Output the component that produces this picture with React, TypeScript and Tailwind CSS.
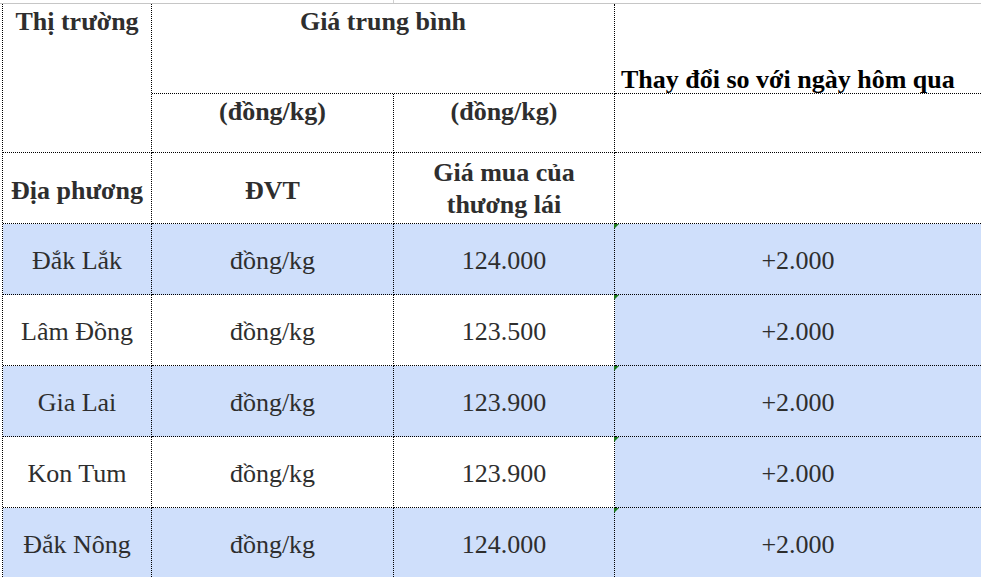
import React from "react";

const rows = [
  { name: "Đắk Lắk", price: "124.000", blue: true },
  { name: "Lâm Đồng", price: "123.500", blue: false },
  { name: "Gia Lai", price: "123.900", blue: true },
  { name: "Kon Tum", price: "123.900", blue: false },
  { name: "Đắk Nông", price: "124.000", blue: true },
];

const cell = "border-r border-b border-dotted border-black flex justify-center leading-[30px] text-center";

export default function App() {
  return (
    <div className="w-[981px] h-[577px] overflow-hidden bg-white font-['Liberation_Serif',serif] text-[26px] text-[#2e2e2e]">
      <div className="h-[3px] flex">
        <div className="w-[394px] border-r border-[#d0d0d0]" />
      </div>
      <div className="border-t border-[#c6c6c6]">
        <div className="ml-[2px] border-l border-dotted border-black grid grid-cols-[149px_242px_221px_1fr] grid-rows-[90px_59px_71px_71px_71px_71px_71px_71px]">
          {/* Row A */}
          <div className={`${cell} row-span-2 items-start pt-[3px] font-bold`}>Thị trường</div>
          <div className={`${cell} col-span-2 items-start pt-[3px] font-bold`}>Giá trung bình</div>
          <div className="border-b border-dotted border-black flex items-end pl-[6px] font-bold text-black leading-[26px] whitespace-nowrap">
            Thay đổi so với ngày hôm qua
          </div>
          {/* Row B */}
          <div className={`${cell} items-start pt-[3px] font-bold`}>(đồng/kg)</div>
          <div className={`${cell} items-start pt-[3px] font-bold`}>(đồng/kg)</div>
          <div className="border-b border-dotted border-black" />
          {/* Row C */}
          <div className={`${cell} items-center pt-[6px] font-bold whitespace-nowrap`}>Địa phương</div>
          <div className={`${cell} items-center pt-[6px] font-bold`}>ĐVT</div>
          <div className={`${cell} items-center pt-[2px] font-bold`}>
            <span className="leading-[32px]">
              Giá mua của
              <br />
              thương lái
            </span>
          </div>
          <div className="border-b border-dotted border-black" />
          {/* Data rows */}
          {rows.map((r) => (
            <React.Fragment key={r.name}>
              <div className={`${cell} items-center pt-[4px] whitespace-nowrap ${r.blue ? "bg-[#cfdffb]" : "bg-white"}`}>{r.name}</div>
              <div className={`${cell} items-center pt-[4px] ${r.blue ? "bg-[#cfdffb]" : "bg-white"}`}>đồng/kg</div>
              <div className={`${cell} items-center pt-[4px] ${r.blue ? "bg-[#cfdffb]" : "bg-white"}`}>{r.price}</div>
              <div className="relative border-b border-dotted border-black flex justify-center items-center pt-[4px] leading-[30px] bg-[#cfdffb]">
                <div className="absolute top-0 -left-px w-[5px] h-[5px] bg-[#1b7a1b] [clip-path:polygon(0_0,100%_0,0_100%)] z-10" />
                +2.000
              </div>
            </React.Fragment>
          ))}
        </div>
      </div>
    </div>
  );
}
